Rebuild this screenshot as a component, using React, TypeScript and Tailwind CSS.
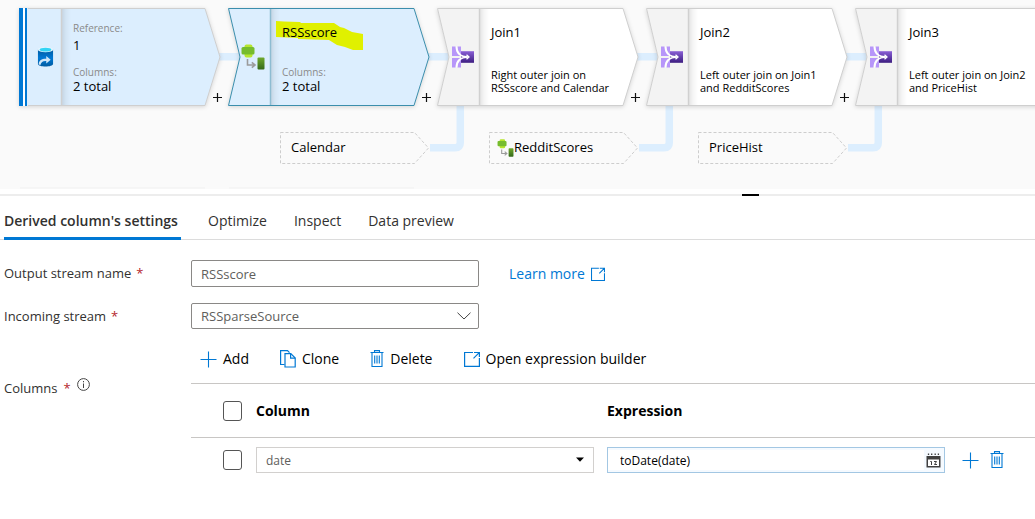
import type { ReactNode } from "react";

type IconProps = { className?: string };

function PlusIcon({ className = "" }: IconProps) {
  return (
    <svg viewBox="0 0 17 17" className={`h-[17px] w-[17px] ${className}`} fill="none" stroke="#0078d4" strokeWidth="1.1" aria-hidden="true">
      <path d="M8.5 0.5V16.5M0.5 8.5H16.5" />
    </svg>
  );
}

function CloneIcon() {
  return (
    <svg viewBox="0 0 16 18" className="h-[18px] w-4" fill="none" stroke="#0078d4" strokeWidth="1.2" aria-hidden="true">
      <path d="M4.5 14.5H0.6V0.6H7.5L9.5 2.6" />
      <path d="M5 3.6H10.8L15.2 8V17H5Z" fill="#fff" />
      <path d="M10.6 3.8V8.2H15.2" />
    </svg>
  );
}

function TrashIcon() {
  return (
    <svg viewBox="0 0 14 18" className="h-[18px] w-[14px]" fill="none" stroke="#0078d4" strokeWidth="1.1" aria-hidden="true">
      <path d="M0.5 2.5H13.5M4.5 2.5V0.6H9.5V2.5M2 2.5V16.5H12V2.5M4.7 5.5V13.5M7 5.5V13.5M9.3 5.5V13.5" />
    </svg>
  );
}

function OpenIcon({ className = "h-4 w-4" }: IconProps) {
  return (
    <svg viewBox="0 0 16 16" className={className} fill="none" stroke="#0078d4" strokeWidth="1.2" aria-hidden="true">
      <path d="M9 1.5H0.6V15.4H15.4V7M10 1.5H15.4V6M15.2 1.7L9.5 7.4" />
    </svg>
  );
}

function CalendarIcon() {
  return (
    <svg viewBox="0 0 15 15" className="h-[15px] w-[15px] shrink-0" aria-hidden="true">
      <path d="M0.5 3H14.5V14.5H0.5Z" fill="#404040" />
      <path d="M2 6.5H13V13H2Z" fill="#fff" />
      <path d="M2.5 0.5V2M5.7 0.5V2M9.2 0.5V2M12.4 0.5V2" stroke="#404040" strokeWidth="1.3" />
      <path d="M4.3 8.5H5.5V12M8 8.5H10.5L8.5 11.5H11" stroke="#404040" strokeWidth="1" fill="none" />
    </svg>
  );
}

function SourceIcon() {
  return (
    <svg viewBox="0 0 18 22" className="h-[22px] w-[17px]" aria-hidden="true">
      <defs>
        <linearGradient id="drum" x1="0" y1="0" x2="0" y2="1">
          <stop offset="0" stopColor="#005ba1" />
          <stop offset="0.5" stopColor="#0078d4" />
          <stop offset="1" stopColor="#005ba1" />
        </linearGradient>
      </defs>
      <path d="M1 3V18.5C1 22 17 22 17 18.5V3Z" fill="url(#drum)" />
      <ellipse cx="9" cy="3.2" rx="8" ry="2.8" fill="#e8f6ff" />
      <ellipse cx="9" cy="3.2" rx="6.2" ry="1.9" fill="#32d4f5" />
      <path d="M1.8 19C2 14.5 5 12.8 9.8 12.9V10L14.5 14L9.8 18V15.2C6 15 4.5 16.5 3.6 19.4Z" fill="#cfe6f8" />
    </svg>
  );
}

function DerivedIcon({ className = "h-[26px] w-6" }: IconProps) {
  return (
    <svg viewBox="0 0 24 26" className={className} aria-hidden="true">
      <defs>
        <linearGradient id="leaf" x1="0" y1="0" x2="0" y2="1">
          <stop offset="0" stopColor="#6fa92c" />
          <stop offset="1" stopColor="#35691a" />
        </linearGradient>
      </defs>
      <rect x="3.5" y="0.5" width="8" height="13" rx="2" fill="#b6e62e" />
      <rect x="0.5" y="3" width="13" height="7.5" rx="1.5" fill="#76bc2d" />
      <path d="M6.5 15V21H13M10.8 18.3L14 21L10.8 23.7" fill="none" stroke="#9b9b9b" strokeWidth="1.6" />
      <rect x="16.5" y="13.5" width="7" height="12" rx="1" fill="url(#leaf)" />
    </svg>
  );
}

function JoinIcon() {
  return (
    <svg viewBox="0 0 22 22" className="h-[22px] w-[22px]" aria-hidden="true">
      <defs>
        <linearGradient id="joinBody" x1="0" y1="0" x2="0" y2="1">
          <stop offset="0" stopColor="#8a5fd6" />
          <stop offset="1" stopColor="#3c1d80" />
        </linearGradient>
      </defs>
      <path d="M0 0.5H3.5C3.5 5 5 8 8.5 10H0ZM5.5 0.5H9V5.5L12.5 10C8 8.5 5.5 5 5.5 0.5Z" fill="#b796f9" />
      <path d="M0 21.5H3.5C3.5 17 5 14 8.5 12H0ZM5.5 21.5H9V16.5L12.5 12C8 13.5 5.5 17 5.5 21.5Z" fill="#b796f9" />
      <path d="M9 5.2H22V16.8H9Z" fill="url(#joinBody)" />
      <path d="M4.5 0.5C4.5 7 8 10.9 16 11M4.5 21.5C4.5 15 8 11.1 16 11" fill="none" stroke="#fff" strokeWidth="1.5" />
      <path d="M14.5 8.7L17 11L14.5 13.3" fill="none" stroke="#fff" strokeWidth="1.3" />
    </svg>
  );
}

function StreamShape({ kind }: { kind: "source" | "selected" | "join" }) {
  const stroke = kind === "selected" ? "#3b8eac" : "#cfcfcf";
  const fill = kind === "join" ? "#fff" : "#dceefe";
  const side = kind === "join" ? "#f3f3f3" : "#dceefe";
  const outline = kind === "source" ? "M0.5 0.5H186L201 49L186 97.5H0.5Z" : "M0.5 0.5H186L201 49L186 97.5H0.5L12 49Z";
  const sidePath = kind === "source" ? "M0.5 0.5H43V97.5H0.5Z" : "M0.5 0.5H43V97.5H0.5L12 49Z";
  return (
    <svg viewBox="0 0 202 98" className="absolute inset-0 h-[98px] w-[202px] drop-shadow-sm" aria-hidden="true">
      <defs>
        <linearGradient id={`fade-${kind}`}>
          <stop offset="0" stopColor="#000" stopOpacity="0.12" />
          <stop offset="0.5" stopColor="#000" stopOpacity="0.04" />
          <stop offset="1" stopColor="#000" stopOpacity="0" />
        </linearGradient>
      </defs>
      <path d={outline} fill={fill} />
      <path d={sidePath} fill={side} />
      <path d="M42 1H52V97H42Z" fill={`url(#fade-${kind})`} />
      <path d="M42.5 1V97" stroke={kind === "selected" ? "#8dbcd2" : "#d0d0d0"} strokeWidth="1.5" />
      <path d={outline} fill="none" stroke={stroke} />
      {kind === "source" && (
        <>
          <path d="M0 0H9V98H0Z" fill="#fff" />
          <path d="M0 0H4V98H0ZM6 0H8V98H6Z" fill="#0078d4" />
          <path d="M8 0H9V98H8Z" fill="#dceefe" />
        </>
      )}
    </svg>
  );
}

function StreamNode({ place, kind, icon, children }: { place: string; kind: "source" | "selected" | "join"; icon: ReactNode; children: ReactNode }) {
  return (
    <div className={`absolute top-2 flex h-[98px] w-[202px] ${place}`}>
      <StreamShape kind={kind} />
      <div className="relative flex w-[43px] shrink-0 items-center justify-end pr-[6px]">{icon}</div>
      <div className="relative flex flex-col pl-[11px] text-black">{children}</div>
    </div>
  );
}

function AddStep({ place }: { place: string }) {
  return (
    <button type="button" aria-label="Add step" className={`absolute top-[92px] ${place}`}>
      <svg viewBox="0 0 11 11" className="h-[11px] w-[11px]" stroke="#111" strokeWidth="1.2" aria-hidden="true">
        <path d="M5.5 1V10M1 5.5H10" />
      </svg>
    </button>
  );
}

function ReferenceNode({ place, icon, label }: { place: string; icon?: ReactNode; label: string }) {
  return (
    <div className={`absolute top-[132px] flex h-8 w-[150px] items-center ${icon ? "pl-2" : "pl-[11px]"} ${place}`}>
      <svg viewBox="0 0 150 32" className="absolute inset-0 h-8 w-[150px]" aria-hidden="true">
        <path d="M0.5 0.5H134.5L148.5 16L134.5 31.5H0.5Z" fill="#fafafa" stroke="#cdcdcd" strokeDasharray="3 2" />
      </svg>
      {icon}
      <span className="relative pb-[2px] text-[13px] leading-4 font-medium text-black">{label}</span>
    </div>
  );
}

function ColumnTotal() {
  return (
    <>
      <span className="text-[10px] leading-[14px] text-[#8a8a8a]">Columns:</span>
      <span className="text-[13px] leading-[14px] font-medium">2 total</span>
    </>
  );
}

const joins = [
  { place: "left-[437px]", name: "Join1", summary: ["Right outer join on", "RSSscore and Calendar"] },
  { place: "left-[646px]", name: "Join2", summary: ["Left outer join on Join1", "and RedditScores"] },
  { place: "left-[855px]", name: "Join3", summary: ["Left outer join on Join2", "and PriceHist"] },
];

function FlowCanvas() {
  return (
    <section className="relative h-[189px] shrink-0 overflow-hidden bg-[#fafafa]">
      <svg className="absolute top-0 left-0 h-[189px] w-[1035px]" viewBox="0 0 1035 189" fill="none" aria-hidden="true">
        <path d="M218 56.8H242M427 56.8H451M636 56.8H660M845 56.8H869" stroke="#dceefe" strokeWidth="7.5" />
        <path d="M430 147.8H455Q460.3 147.8 460.3 142.5V104M639 147.8H664Q669.3 147.8 669.3 142.5V104M848 147.8H873Q878.3 147.8 878.3 142.5V104" stroke="#dceefe" strokeWidth="7.5" />
        <path d="M20 188H205M229 188H414" stroke="#f1f1f1" />
      </svg>

      <StreamNode place="left-[19px]" kind="source" icon={<div className="pr-[2px]"><SourceIcon /></div>}>
        <span className="pt-[13px] text-[10px] leading-[14px] text-[#8a8a8a]">Reference:</span>
        <span className="pt-[3px] pb-[13px] text-[13px] leading-[14px] font-medium">1</span>
        <ColumnTotal />
      </StreamNode>
      <StreamNode place="left-[228px]" kind="selected" icon={<DerivedIcon />}>
        <svg viewBox="0 0 88 31" className="absolute top-[12px] left-[5px] h-[31px] w-[88px]" aria-hidden="true">
          <path d="M0 1L8 1.5L24 2L25 3H58L64 7L68 8L76 12L87 14V30H77L69 27L61 25L53 20L22 19V18L0 17Z" fill="#e0f000" />
        </svg>
        <span className="relative pt-4 pb-[25px] text-[13px] leading-4 font-medium">RSSscore</span>
        <ColumnTotal />
      </StreamNode>
      {joins.map((join) => (
        <StreamNode key={join.name} place={join.place} kind="join" icon={<JoinIcon />}>
          <span className="pt-4 pb-7 text-[13px] leading-4 font-medium">{join.name}</span>
          <p className="text-[11px] leading-[13px] font-medium whitespace-nowrap">
            {join.summary[0]}
            <br />
            {join.summary[1]}
          </p>
        </StreamNode>
      ))}

      <AddStep place="left-[212px]" />
      <AddStep place="left-[421px]" />
      <AddStep place="left-[630px]" />
      <AddStep place="left-[839px]" />

      <ReferenceNode place="left-[280px]" label="Calendar" />
      <ReferenceNode place="left-[489px]" label="RedditScores" icon={<DerivedIcon className="relative h-[18px] w-[17px]" />} />
      <ReferenceNode place="left-[698px]" label="PriceHist" />
    </section>
  );
}

const tabs = ["Optimize", "Inspect", "Data preview"];
const checkbox = "block h-5 w-[19px] appearance-none rounded-[3px] border border-[#555] bg-white checked:bg-[#0078d4]";

function Required() {
  return <span className="text-[#b4262c]">*</span>;
}

export default function App() {
  return (
    <main className="flex min-h-screen flex-col bg-white font-['Open_Sans','Noto_Sans',sans-serif] text-sm text-[#323130]">
      <FlowCanvas />
      <div className="mt-[5px] flex h-[2px] bg-[#ededed]">
        <div className="ml-auto w-[17px] bg-black" />
        <div className="w-[276px]" />
      </div>

      <nav role="tablist" className="flex h-11 items-stretch gap-[27px] border-b border-[#dcdcdc] pl-1">
        <button type="button" role="tab" aria-selected="true" className="-mb-px min-w-[177px] border-b-[3px] border-[#0078d4] pt-2 text-left font-semibold">
          Derived column's settings
        </button>
        {tabs.map((tab) => (
          <button key={tab} type="button" role="tab" aria-selected="false" className="pt-[6px]">
            {tab}
          </button>
        ))}
      </nav>

      <form className="grid grid-cols-[187px_minmax(0,1fr)] pt-5 pl-1 text-[13px]">
        <label htmlFor="stream-name" className="flex h-[27px] items-center gap-[5px] font-medium">
          Output stream name <Required />
        </label>
        <div className="flex items-center gap-[30px]">
          <input id="stream-name" defaultValue="RSSscore" className="h-[27px] w-72 rounded-[2px] border border-[#8a8886] px-[9px] text-[#605e5c]" />
          <a href="#learn" className="flex items-center gap-[6px] text-sm text-[#0078d4]">
            Learn more <OpenIcon className="h-[14px] w-[14px]" />
          </a>
        </div>

        <label htmlFor="incoming" className="mt-4 flex h-[26px] items-center gap-[5px] font-medium">
          Incoming stream <Required />
        </label>
        <div className="relative mt-4 w-72">
          <select id="incoming" className="block h-[26px] w-full appearance-none rounded-[2px] border border-[#8a8886] bg-white px-[9px] text-[#605e5c]">
            <option>RSSparseSource</option>
          </select>
          <svg viewBox="0 0 14 8" className="pointer-events-none absolute top-[9px] right-2 h-2 w-[14px]" fill="none" stroke="#444" aria-hidden="true">
            <path d="M0.5 0.7L7 7L13.5 0.7" />
          </svg>
        </div>

        <div className="mt-[49px] flex h-5 items-center gap-[6px] font-medium">
          Columns <Required />
          <svg viewBox="0 0 13 13" className="mb-[7px] h-[13px] w-[13px]" fill="none" stroke="#444" aria-hidden="true">
            <circle cx="6.5" cy="6.5" r="5.9" />
            <path d="M6.5 5.5V10M6.5 3V4.3" />
          </svg>
        </div>
        <div>
          <div className="mt-5 flex h-[34px] gap-[31px] pl-[9px] text-sm leading-5 text-black">
            <button type="button" className="flex h-5 items-center gap-[6px]"><PlusIcon /> Add</button>
            <button type="button" className="flex h-5 items-center gap-[6px]"><CloneIcon /> Clone</button>
            <button type="button" className="flex h-5 items-center gap-[6px]"><TrashIcon /> Delete</button>
            <button type="button" className="flex h-5 items-center gap-[6px]"><OpenIcon /> Open expression builder</button>
          </div>
          <table className="w-full table-fixed border-collapse text-left">
            <thead className="border-y border-[#c8c6c4] text-sm text-black">
              <tr className="h-[54px]">
                <th className="w-[65px] pl-8"><input type="checkbox" aria-label="Select all columns" className={checkbox} /></th>
                <th className="font-bold">Column</th>
                <th className="font-bold">Expression</th>
                <th className="w-[77px]" aria-label="Row actions" />
              </tr>
            </thead>
            <tbody>
              <tr className="h-[45px]">
                <td className="pl-8"><input type="checkbox" aria-label="Select date" className={checkbox} /></td>
                <td className="pr-[13px]">
                  <div className="relative">
                    <select aria-label="Column name" className="block h-[26px] w-full appearance-none border border-[#d2d0ce] bg-white px-[9px] text-[12px] text-[#605e5c]">
                      <option>date</option>
                    </select>
                    <svg viewBox="0 0 8 5" className="pointer-events-none absolute top-[10px] right-[10px] h-[5px] w-2" aria-hidden="true">
                      <path d="M0 0.5H8L4 4.8Z" fill="#000" />
                    </svg>
                  </div>
                </td>
                <td className="pr-[13px]">
                  <div className="flex h-[26px] items-center border border-[#a3c7e3] bg-[#f5faff] pr-[3px]">
                    <input aria-label="Expression" defaultValue="toDate(date)" className="mr-[2px] h-5 min-w-0 flex-1 bg-white pl-3 text-[12px] text-black" />
                    <CalendarIcon />
                  </div>
                </td>
                <td>
                  <div className="flex items-center gap-[11px] pl-1">
                    <button type="button" aria-label="Add column"><PlusIcon /></button>
                    <button type="button" aria-label="Delete column"><TrashIcon /></button>
                  </div>
                </td>
              </tr>
            </tbody>
          </table>
        </div>
      </form>
    </main>
  );
}
